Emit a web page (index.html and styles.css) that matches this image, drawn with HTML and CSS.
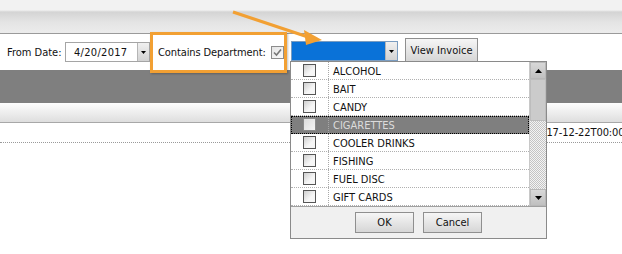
FILE: index.html
```html
<!DOCTYPE html>
<html>
<head>
<meta charset="utf-8">
<link rel="stylesheet" href="styles.css">
</head>
<body>
<div class="page">
  <div class="topbar"></div>
  <div class="toolbar">
    <span class="lbl from-lbl">From Date:</span>
    <div class="combo date">
      <span class="combo-text">4/20/2017</span>
      <span class="combo-btn"><svg width="5" height="3" viewBox="0 0 5 3"><path d="M0 0H5L2.5 3Z" fill="#000"/></svg></span>
    </div>
    <div class="dept">
      <span class="lbl">Contains Department:</span>
      <span class="chk"><svg width="11" height="11" viewBox="0 0 11 11"><path d="M2 5.5L4.5 8L9 2.5" fill="none" stroke="#777" stroke-width="1.6"/></svg></span>
    </div>
    <div class="combo blue">
      <span class="combo-text"></span>
      <span class="combo-btn"><svg width="5" height="3" viewBox="0 0 5 3"><path d="M0 0H5L2.5 3Z" fill="#000"/></svg></span>
    </div>
    <button class="btn view">View Invoice</button>
  </div>
  <div class="band"></div>
  <div class="grid-header"></div>
  <div class="grid-row">
    <span class="cell-spacer"></span>
    <span class="cell-date">2017-12-22T00:00:00</span>
  </div>

  <svg class="arrow" width="100" height="50" viewBox="0 0 100 50">
    <path d="M3 2L78 27" stroke="#f2a033" stroke-width="3" fill="none"/>
    <path d="M74 20L92 30L76 35Z" fill="#f2a033"/>
  </svg>

  <div class="popup">
    <div class="popup-body">
      <div class="list">
        <div class="row"><span class="row-chk"><span class="box"></span></span><span class="row-text">ALCOHOL</span></div>
        <div class="row"><span class="row-chk"><span class="box"></span></span><span class="row-text">BAIT</span></div>
        <div class="row"><span class="row-chk"><span class="box"></span></span><span class="row-text">CANDY</span></div>
        <div class="row selected"><span class="row-chk"><span class="box"></span></span><span class="row-text">CIGARETTES</span></div>
        <div class="row"><span class="row-chk"><span class="box"></span></span><span class="row-text">COOLER DRINKS</span></div>
        <div class="row"><span class="row-chk"><span class="box"></span></span><span class="row-text">FISHING</span></div>
        <div class="row"><span class="row-chk"><span class="box"></span></span><span class="row-text">FUEL DISC</span></div>
        <div class="row"><span class="row-chk"><span class="box"></span></span><span class="row-text">GIFT CARDS</span></div>
      </div>
      <div class="scrollbar">
        <span class="sb-btn"><svg width="7" height="4" viewBox="0 0 7 4"><path d="M0 4H7L3.5 0Z" fill="#000"/></svg></span>
        <span class="sb-thumb"></span>
        <span class="sb-track"></span>
        <span class="sb-btn"><svg width="7" height="4" viewBox="0 0 7 4"><path d="M0 0H7L3.5 4Z" fill="#000"/></svg></span>
      </div>
    </div>
    <div class="popup-foot">
      <button class="btn foot-btn">OK</button>
      <button class="btn foot-btn">Cancel</button>
    </div>
  </div>
</div>
</body>
</html>
```

FILE: styles.css
```css
* { box-sizing: border-box; }
html, body { margin: 0; padding: 0; }
body {
  width: 622px;
  height: 254px;
  overflow: hidden;
  background: #fff;
  font-family: "DejaVu Sans Condensed", "DejaVu Sans", sans-serif;
  font-stretch: condensed;
  font-size: 11px;
  color: #111;
}
.page {
  position: relative;
  width: 622px;
  height: 254px;
  overflow: hidden;
}
.topbar {
  height: 34px;
  background: linear-gradient(to bottom, #f2f2f2 0px, #f2f2f2 10px, #d4d4d4 12px, #e4e4e4 22px, #ececec 33px);
  border-bottom: 1px solid #9a9a9a;
}
.toolbar {
  height: 36px;
  display: flex;
  align-items: center;
  padding-left: 7px;
  background: #fff;
}
.lbl { white-space: nowrap; }
.from-lbl { width: 58px; }
.combo {
  display: flex;
  height: 20px;
  border: 1px solid #a5a5a5;
  background: #fff;
}
.combo-text {
  display: flex;
  align-items: center;
  flex: 1;
  padding-left: 8px;
  letter-spacing: 0.3px;
}
.combo-btn {
  width: 12px;
  display: flex;
  align-items: center;
  justify-content: center;
  background: linear-gradient(to bottom, #f0f0f0, #d2d2d2);
  border-left: 1px solid #b5b5b5;
}
.date { width: 85px; }
.dept {
  position: relative;
  width: 137px;
  height: 20px;
  display: flex;
  align-items: center;
  padding-left: 8px;
  letter-spacing: -0.1px;
}
.dept::after {
  content: "";
  position: absolute;
  left: 0;
  right: 0;
  top: -10px;
  bottom: -11px;
  border: 3px solid #f2a033;
  box-shadow: 1px 1px 2px rgba(0,0,0,0.25);
}
.chk {
  width: 13px;
  height: 13px;
  margin-left: 5px;
  border: 1px solid #8c8c8c;
  background: linear-gradient(135deg, #e4e4e4, #fbfbfb);
  display: flex;
  align-items: center;
  justify-content: center;
}
.blue {
  width: 107px;
  margin-left: 4px;
  margin-top: -2px;
  height: 20px;
  border-color: #7a9cc0;
}
.blue .combo-text { background: #0a72d8; }
.btn {
  font-family: inherit;
  font-stretch: condensed;
  font-size: 11px;
  color: #111;
  border: 1px solid #8f8f8f;
  background: linear-gradient(to bottom, #f6f6f6, #d6d6d6);
  padding: 0;
  margin: 0;
}
.view {
  width: 73px;
  height: 24px;
  margin-left: 7px;
  margin-top: -4px;
}
.band {
  height: 33px;
  background: #7f7f7f;
}
.grid-header {
  height: 20px;
  background: linear-gradient(to bottom, #fdfdfd, #dedede);
  border-bottom: 1px solid #a8a8a8;
}
.grid-row {
  display: flex;
  height: 20px;
  border-bottom: 1px dotted #9a9a9a;
  align-items: center;
}
.cell-spacer { width: 534px; flex: none; }
.cell-date {
  flex: 1;
  min-width: 0;
  overflow: hidden;
  white-space: nowrap;
  letter-spacing: -0.1px;
}

.arrow {
  position: absolute;
  left: 230px;
  top: 10px;
}

.popup {
  position: absolute;
  left: 290px;
  top: 61px;
  width: 257px;
  border: 1px solid #8a8a8a;
  background: #fff;
}
.popup-body {
  display: flex;
  height: 145px;
  border-bottom: 1px solid #a0a0a0;
}
.list { flex: 1; }
.row {
  display: flex;
  height: 18px;
  border-bottom: 1px dotted #b0b0b0;
}
.row-chk {
  width: 38px;
  display: flex;
  align-items: center;
  padding-left: 12px;
  border-right: 1px dotted #a8a8a8;
}
.box {
  width: 13px;
  height: 13px;
  border: 1px solid #555;
  background: linear-gradient(135deg, #cfcfcf, #f6f6f6 60%);
}
.row-text {
  display: flex;
  align-items: center;
  padding-left: 4px;
  padding-top: 1px;
}
.row.selected {
  background: #7f7f7f;
  color: #dcdcdc;
  outline: 1px dotted #000;
  outline-offset: -1px;
}
.row.selected .box { border-color: #8a8a8a; background: linear-gradient(135deg, #dcdcdc, #f4f4f4); }
.scrollbar {
  width: 17px;
  display: flex;
  flex-direction: column;
  border-left: 1px solid #c8c8c8;
}
.sb-btn {
  height: 17px;
  display: flex;
  align-items: center;
  justify-content: center;
  background: linear-gradient(to bottom, #d8d8d8, #c0c0c0);
  border: 1px solid #b8b8b8;
}
.sb-thumb {
  height: 42px;
  background: #cbcbcb;
  border: 1px solid #bdbdbd;
}
.sb-track {
  flex: 1;
  background: repeating-conic-gradient(#c4c4c4 0 25%, #f4f4f4 0 50%) 0 0 / 2px 2px;
}
.popup-foot {
  height: 31px;
  background: #f0f0f0;
  display: flex;
  justify-content: center;
  align-items: center;
  gap: 9px;
}
.foot-btn {
  width: 59px;
  height: 21px;
}
```
